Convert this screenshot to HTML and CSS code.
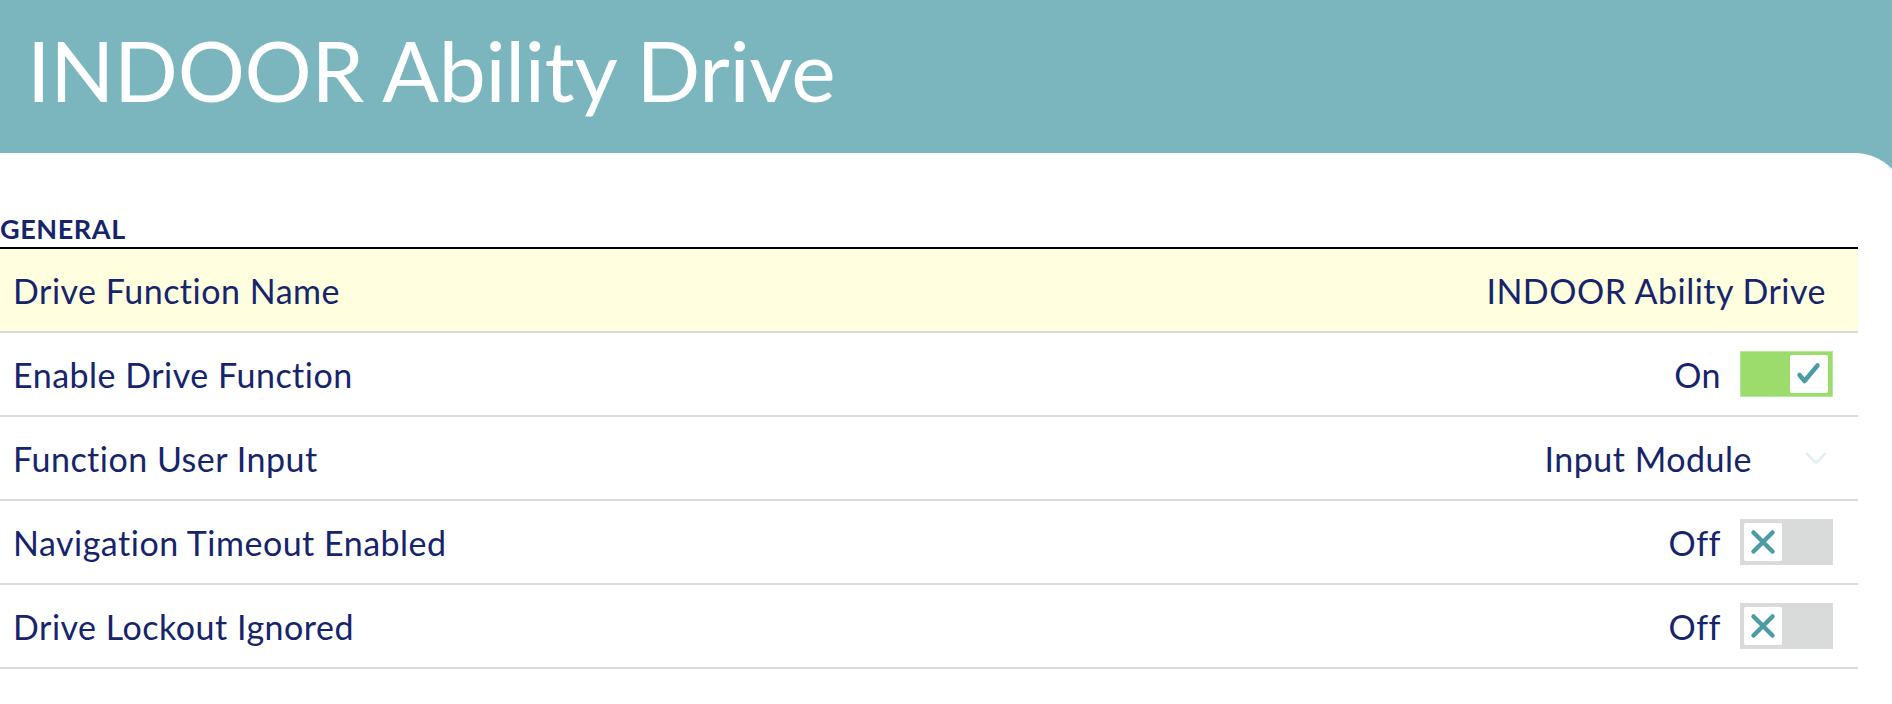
FILE: index.html
```html
<!DOCTYPE html>
<html lang="en">
<head>
<meta charset="utf-8">
<title>INDOOR Ability Drive</title>
<link rel="stylesheet" href="styles.css">
</head>
<body>
<header class="page-header">
  <h1 class="page-title">INDOOR Ability Drive</h1>
</header>
<main class="panel">
  <section class="settings">
    <h2 class="section-title">GENERAL</h2>
    <div class="row row-highlight">
      <span class="label">Drive Function Name</span>
      <span class="value value-text">INDOOR Ability Drive</span>
    </div>
    <div class="row">
      <span class="label">Enable Drive Function</span>
      <span class="value">
        <span class="state">On</span>
        <span class="toggle toggle-on">
          <span class="knob">
            <svg width="38" height="38" viewBox="0 0 38 38"><path d="M9.5 20 L14.5 26 L27.5 10.5" fill="none" stroke="#4b9ca7" stroke-width="4.5" stroke-linecap="round" stroke-linejoin="round"/></svg>
          </span>
        </span>
      </span>
    </div>
    <div class="row">
      <span class="label">Function User Input</span>
      <span class="value">
        <span class="select-text">Input Module</span>
        <svg class="chevron" width="24" height="16" viewBox="0 0 24 16"><path d="M2 3 L12 13 L22 3" fill="none" stroke="#e2efef" stroke-width="2.5"/></svg>
      </span>
    </div>
    <div class="row">
      <span class="label">Navigation Timeout Enabled</span>
      <span class="value">
        <span class="state">Off</span>
        <span class="toggle toggle-off">
          <span class="knob">
            <svg width="38" height="38" viewBox="0 0 38 38"><path d="M9.5 9.5 L28.5 28.5 M28.5 9.5 L9.5 28.5" fill="none" stroke="#4b9ca7" stroke-width="4.5" stroke-linecap="round"/></svg>
          </span>
        </span>
      </span>
    </div>
    <div class="row">
      <span class="label">Drive Lockout Ignored</span>
      <span class="value">
        <span class="state">Off</span>
        <span class="toggle toggle-off">
          <span class="knob">
            <svg width="38" height="38" viewBox="0 0 38 38"><path d="M9.5 9.5 L28.5 28.5 M28.5 9.5 L9.5 28.5" fill="none" stroke="#4b9ca7" stroke-width="4.5" stroke-linecap="round"/></svg>
          </span>
        </span>
      </span>
    </div>
  </section>
</main>
</body>
</html>
```

FILE: styles.css
```css
html, body {
  margin: 0;
  padding: 0;
}
body {
  background: #7bb6bf;
  font-family: Lato, "Open Sans", sans-serif;
  color: #16246c;
  overflow: hidden;
  height: 704px;
}
.page-header {
  height: 153px;
  box-sizing: border-box;
  padding: 20px 0 0 27px;
}
.page-title {
  margin: 0;
  font-size: 84px;
  line-height: 1.2;
  font-weight: 400;
  letter-spacing: -0.3px;
  color: #ffffff;
}
.panel {
  background: #ffffff;
  margin-right: -14px;
  border-top-right-radius: 51px;
  padding-top: 60px;
  height: 551px;
  box-sizing: border-box;
}
.settings {
  width: 1858px;
}
.section-title {
  margin: 0;
  font-size: 27px;
  line-height: 31px;
  font-weight: 700;
  letter-spacing: 0.6px;
  padding-bottom: 3px;
  border-bottom: 2px solid #000000;
  color: #16246c;
}
.row {
  display: flex;
  align-items: center;
  justify-content: space-between;
  height: 84px;
  box-sizing: border-box;
  border-bottom: 2px solid #dadada;
  padding: 0 25px 0 13px;
}
.row-highlight {
  background: #ffffe0;
}
.label,
.value {
  font-size: 34px;
  letter-spacing: 0.5px;
}
.value {
  display: flex;
  align-items: center;
}
.value-text {
  margin-right: 7px;
}
.state {
  margin-right: 19px;
}
.toggle {
  display: flex;
  align-items: center;
  width: 93px;
  height: 46px;
  box-sizing: border-box;
  padding: 0 4px;
}
.toggle-on {
  background: #9bdc6c;
  border: 1px solid #b6e89a;
  justify-content: flex-end;
}
.toggle-off {
  background: #d9dada;
  justify-content: flex-start;
}
.knob {
  width: 38px;
  height: 38px;
  background: #ffffff;
  border-radius: 2px;
  display: flex;
  align-items: center;
  justify-content: center;
}
.select-text {
  margin-right: 52px;
}
.chevron {
  margin-right: 5px;
}
```
